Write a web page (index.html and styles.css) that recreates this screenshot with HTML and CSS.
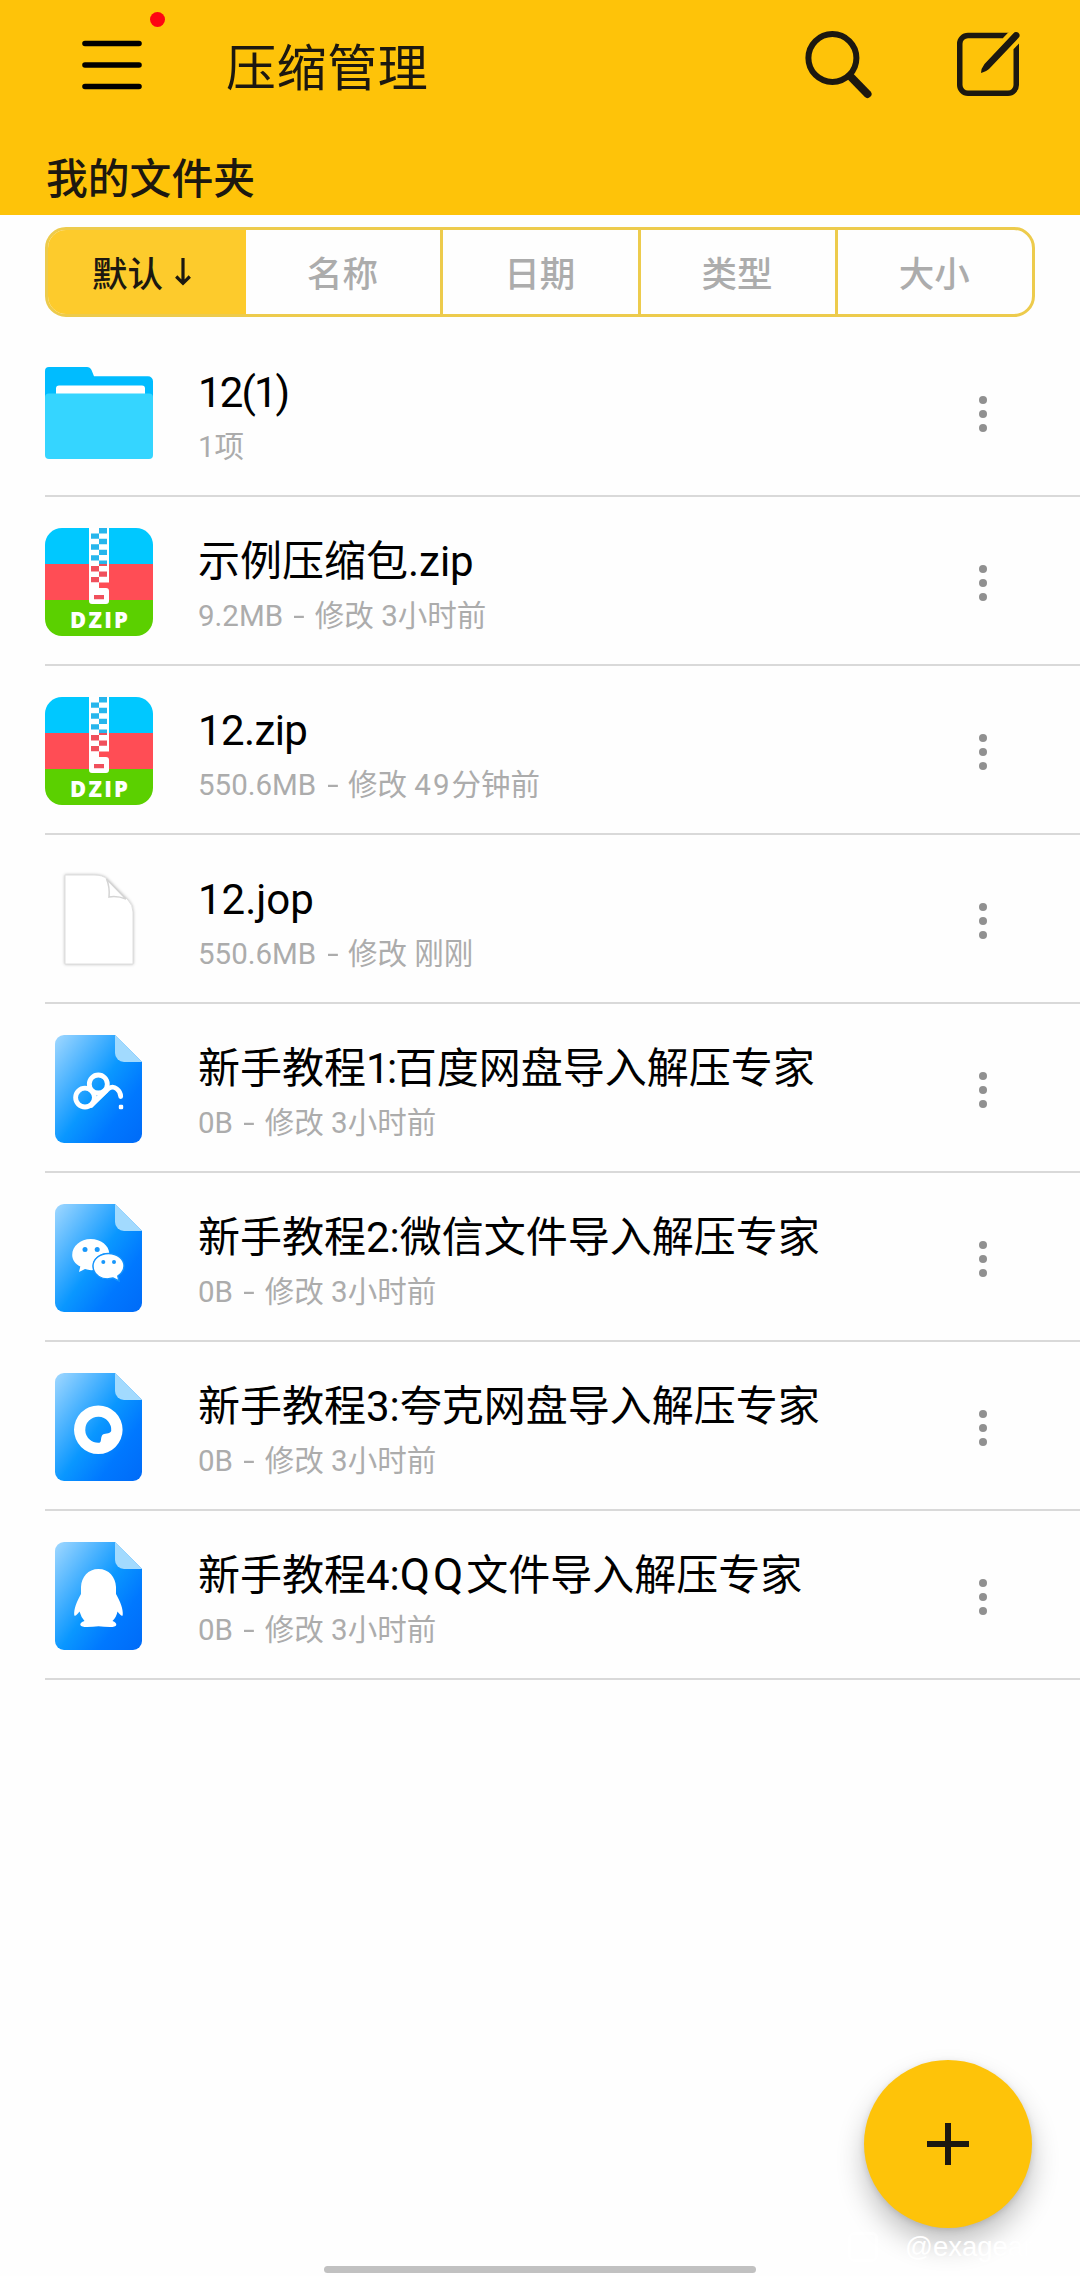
FILE: index.html
```html
<!DOCTYPE html>
<html lang="zh-CN">
<head>
<meta charset="utf-8">
<title>压缩管理</title>
<link rel="stylesheet" href="styles.css">
</head>
<body>
<svg class="defs" width="0" height="0" aria-hidden="true">
  <defs>
    <linearGradient id="docFill" x1="0" y1="0.05" x2="1" y2="0.95">
      <stop offset="0" stop-color="#9ad5ff"/>
      <stop offset="0.5" stop-color="#0a97ff"/>
      <stop offset="0.75" stop-color="#0078ff"/>
      <stop offset="1" stop-color="#006cf8"/>
    </linearGradient>
    <symbol id="doc" viewBox="0 0 87 108">
      <path d="M9 0H60L87 27V99a9 9 0 0 1-9 9H9a9 9 0 0 1-9-9V9a9 9 0 0 1 9-9z" fill="url(#docFill)"/>
      <path d="M60 0L87 27H69a9 9 0 0 1-9-9z" fill="#a2dafe"/>
    </symbol>
    <symbol id="zip" viewBox="0 0 108 108">
      <path d="M0 36V17A17 17 0 0 1 17 0H91A17 17 0 0 1 108 17V36z" fill="#00c8ff"/>
      <path d="M0 36H108V72H0z" fill="#ff4d55"/>
      <path d="M0 72H108V91A17 17 0 0 1 91 108H17A17 17 0 0 1 0 91z" fill="#5bd000"/>
      <path d="M44 0H64V54.4H54V60H61a3 3 0 0 1 3 3V73a3 3 0 0 1-3 3H47a3 3 0 0 1-3-3z" fill="#fff"/>
      <path d="M54 0h8v5.4h-8zM46 5.4h8v5.4h-8zM54 10.8h8v5.4h-8zM46 16.3h8v5.4h-8zM54 21.7h8v5.4h-8zM46 27.2h8v5.4h-8zM54 32.6h8v3.4h-8z" fill="#27b6ec"/>
      <path d="M54 36h8v2h-8zM46 38h8v5.4h-8zM54 43.4h8v5.4h-8zM46 48.9h8v5.4h-8zM49 67h10v4.300h-10z" fill="#f0505c"/>
      <text x="25" y="100" textLength="58" lengthAdjust="spacing" class="zip-label">DZIP</text>
    </symbol>
  </defs>
</svg>

<header class="header">
  <div class="bar">
    <button class="icon-btn menu" aria-label="菜单">
      <svg width="60" height="50" viewBox="0 0 60 50"><path d="M3 3.500H57M3 25H57M3 46.500H57" stroke="#000" stroke-width="5.600" stroke-linecap="round"/></svg>
      <span class="badge"></span>
    </button>
    <h1 class="title">压缩管理</h1>
    <button class="icon-btn" aria-label="搜索">
      <svg width="68" height="70" viewBox="0 0 68 70" fill="none" stroke="#1c1810"><circle cx="28.400" cy="28" r="24" stroke-width="6"/><path d="M46 46L63.500 64" stroke-width="8" stroke-linecap="round"/></svg>
    </button>
    <button class="icon-btn edit" aria-label="编辑">
      <svg width="66" height="66" viewBox="0 0 66 66" fill="none" stroke="#1c1810"><path d="M52.500 0.300L46.800 6.200H12a5.500 5.500 0 0 0-5.500 5.500V53a5.500 5.500 0 0 0 5.500 5.500H52a5.500 5.500 0 0 0 5.500-5.500V17.300L63 11.500V53A11 11 0 0 1 52 64H12A11 11 0 0 1 1 53V11.700A11 11 0 0 1 12 0.700H52.500z" fill="#1c1810" stroke="none"/><path d="M60.200 0a3.400 3.400 0 0 1 2.400 5.800L33.500 36.500Q31 39 25 41Q25 36.500 28.500 32L57.500 1.200A3.400 3.400 0 0 1 60.200 0z" fill="#1c1810" stroke="none"/></svg>
    </button>
  </div>
  <h2 class="path">我的文件夹</h2>
</header>

<nav class="tabs">
  <button class="tab active">默认<svg width="16" height="28" viewBox="0 0 16 28" fill="none" stroke="#1c1810" stroke-width="3.200"><path d="M8 0V25M1.200 18.500L8 25.300L14.800 18.500"/></svg></button>
  <button class="tab">名称</button>
  <button class="tab">日期</button>
  <button class="tab">类型</button>
  <button class="tab">大小</button>
</nav>

<main class="list">
  <article class="row">
    <div class="thumb"><svg width="108" height="92" viewBox="0 0 108 92"><path d="M4 0H42q3 0 4.500 3L49 9.300H103a5 5 0 0 1 5 5V40H0V4a4 4 0 0 1 4-4z" fill="#00bcff"/><path d="M11 30V21.500a3 3 0 0 1 3-3H97a3 3 0 0 1 3 3V30z" fill="#fff"/><rect y="26.500" width="108" height="65.500" rx="4" fill="#35d5ff"/></svg></div>
    <div class="info"><div class="name tight">12(1)</div><div class="meta">1项</div></div>
    <button class="more" aria-label="更多"><i></i><i></i><i></i></button>
  </article>
  <article class="row">
    <div class="thumb"><svg width="108" height="108"><use href="#zip"/></svg></div>
    <div class="info"><div class="name">示例压缩包.zip</div><div class="meta">9.2MB <span class="dash">-</span> 修改 3小时前</div></div>
    <button class="more" aria-label="更多"><i></i><i></i><i></i></button>
  </article>
  <article class="row">
    <div class="thumb"><svg width="108" height="108"><use href="#zip"/></svg></div>
    <div class="info"><div class="name latin">12.zip</div><div class="meta">550.6MB <span class="dash">-</span> 修改 <span class="digits">49</span>分钟前</div></div>
    <button class="more" aria-label="更多"><i></i><i></i><i></i></button>
  </article>
  <article class="row">
    <div class="thumb"><svg class="blank" width="70" height="91" viewBox="0 0 70 91"><path d="M1 1H30Q39 1 43 5L64 26Q69 31 69 38V90H1z" fill="#fff" stroke="#dedede"/><path d="M42.500 5Q46 13 45 23Q53 21.500 62 25z" fill="#fff" stroke="#d4d4d4" stroke-width="1.500"/></svg></div>
    <div class="info"><div class="name">12.jop</div><div class="meta">550.6MB <span class="dash">-</span> 修改 刚刚</div></div>
    <button class="more" aria-label="更多"><i></i><i></i><i></i></button>
  </article>
  <article class="row">
    <div class="thumb"><svg class="doc" width="87" height="108" viewBox="0 0 87 108"><use href="#doc"/><g fill="none" stroke="#fff" stroke-width="4.800"><circle cx="43.300" cy="49" r="9"/><circle cx="30" cy="62.600" r="9.400"/><path d="M36 70L53.500 53.500Q58 50.500 62 54Q65.700 57 65.700 61.500" stroke-linecap="round"/></g><path d="M33 71L37 73L53 57L49 54L36 67z" fill="#fff"/><rect x="63.800" y="69.800" width="4.400" height="4.400" rx="1.200" fill="#fff"/></svg></div>
    <div class="info"><div class="name">新手教程<span class="one">1:</span>百度网盘导入解压专家</div><div class="meta">0B <span class="dash">-</span> 修改 3小时前</div></div>
    <button class="more" aria-label="更多"><i></i><i></i><i></i></button>
  </article>
  <article class="row">
    <div class="thumb"><svg class="doc" width="87" height="108" viewBox="0 0 87 108"><use href="#doc"/><path d="M35.700 35C46 35 54 41.500 54.300 49.500C44 48 35 57 38.500 66Q34 66.500 30 65L24 68L25.300 62.500C20 60 17.200 55.500 17.200 51C17.200 42 25.500 35 35.700 35z" fill="#fff"/><path d="M53.500 49.500C62.500 49.500 69 55.500 69 62C69 66.500 66.500 69.500 62.800 72L64 77L58 74C47 77 38 71 38 62C38 55.500 44.500 49.500 53.500 49.500z" fill="#fff" stroke="#1493fd" stroke-width="1.400"/><g fill="#1897fb"><circle cx="30" cy="45.500" r="2.500"/><circle cx="42.200" cy="45.500" r="2.500"/><circle cx="48.300" cy="58" r="2"/><circle cx="59" cy="58" r="2"/></g></svg></div>
    <div class="info"><div class="name">新手教程2:微信文件导入解压专家</div><div class="meta">0B <span class="dash">-</span> 修改 3小时前</div></div>
    <button class="more" aria-label="更多"><i></i><i></i><i></i></button>
  </article>
  <article class="row">
    <div class="thumb"><svg class="doc" width="87" height="108" viewBox="0 0 87 108"><use href="#doc"/><path fill-rule="evenodd" d="M43.300 32.500a24.300 24.300 0 1 1 0 48.600a24.300 24.300 0 1 1 0-48.600zM56.200 58A13 13 0 1 0 44.500 69.700C46.500 69 45.500 65.500 47 62.500C49 59.500 55 61.500 56.200 58z" fill="#fff"/></svg></div>
    <div class="info"><div class="name">新手教程3:夸克网盘导入解压专家</div><div class="meta">0B <span class="dash">-</span> 修改 3小时前</div></div>
    <button class="more" aria-label="更多"><i></i><i></i><i></i></button>
  </article>
  <article class="row">
    <div class="thumb"><svg class="doc" width="87" height="108" viewBox="0 0 87 108"><use href="#doc"/><path d="M43.500 27C54 27 60.500 35 61 45V52C65 59 68.500 67 67.700 73.500Q66 74.500 62.500 69.500Q61.500 75 57.500 79Q61.500 80.500 61.300 83Q60.500 85 55 85Q49 85 43.500 84.300Q38 85 32 85Q26.500 85 25.300 83Q25 80.500 29.500 79Q26 75 24.500 69.500Q21 74.500 19.300 73.500C18.500 67 22 59 26 52V45C26.500 35 33 27 43.500 27z" fill="#fff"/></svg></div>
    <div class="info"><div class="name">新手教程4:<span class="qq">QQ</span>文件导入解压专家</div><div class="meta">0B <span class="dash">-</span> 修改 3小时前</div></div>
    <button class="more" aria-label="更多"><i></i><i></i><i></i></button>
  </article>
</main>

<button class="fab" aria-label="添加"><svg width="42" height="42" viewBox="0 0 42 42"><path d="M0 21H42M21 0V42" stroke="#1c1810" stroke-width="6"/></svg></button>
<div class="watermark"><span class="mark"></span>@exagear</div>
<div class="home-bar"></div>
</body>
</html>
```
FILE: styles.css
```css
* { box-sizing: border-box; }
body {
  margin: 0;
  position: relative;
  height: 2276px;
  overflow: hidden;
  background: #fefefe;
  color: #000;
  font-family: Roboto, "Noto Sans CJK SC", sans-serif;
}
.defs { position: absolute; }
svg { display: block; flex: none; }
button { margin: 0; padding: 0; border: 0; background: none; font: inherit; color: inherit; }
h1, h2 { margin: 0; }

.header { height: 215px; background: #fec309; color: #1c1810; }
.bar { display: flex; align-items: center; height: 129px; padding: 0 58px 0 82px; }
.icon-btn { position: relative; }
.menu { margin-right: 84px; }
.badge {
  position: absolute;
  top: -28px;
  right: -23px;
  width: 15px;
  height: 15px;
  border-radius: 50%;
  background: #fe0412;
}
.title { flex: 1; font: 400 50px/60px "Noto Sans CJK SC", sans-serif; letter-spacing: 0.600px; padding-bottom: 2px; }
.edit { margin-left: 84px; }
.path { padding-left: 46px; font: 500 41.800px/60px "Noto Sans CJK SC", sans-serif; padding-top: 17px; }

.tabs {
  display: flex;
  height: 90px;
  margin: 12px 45px 0;
  border: 3px solid #edcb4c;
  border-radius: 21px;
  overflow: hidden;
}
.tab {
  flex: 1 1 0;
  display: flex;
  align-items: center;
  justify-content: center;
  gap: 12px;
  color: #acacac;
  font: 500 35.500px/50px "Noto Sans CJK SC", sans-serif;
}
.tab + .tab { border-left: 3px solid #edcb4c; padding-right: 1px; }
.tab.active { flex: 0 0 195px; padding-right: 8px; background: #fdcb2c; color: #1c1810; }
.tab.active + .tab { border-left-color: #fdcb2c; }

.list { margin: 11px 0 0 45px; }
.row { display: flex; height: 169px; border-bottom: 2px solid #d9d9d9; }
.thumb { display: flex; width: 108px; padding-top: 2px; align-items: center; justify-content: center; }
.doc { margin-right: 1px; }
.blank { filter: drop-shadow(0 0 1.500px rgba(0, 0, 0, 0.250)); }
.info { flex: 1; padding: 38px 0 0 45px; }
.name { font-size: 42px; line-height: 54px; white-space: nowrap; }
.name.tight { letter-spacing: -1.900px; }
.name.latin { letter-spacing: -0.600px; }
.one { letter-spacing: -2.500px; }
.qq { font-size: 44px; line-height: 1; letter-spacing: 3px; }
.meta { font-size: 29.500px; line-height: 54px; color: #acacac; white-space: nowrap; }
.dash { display: inline-block; margin: 0 4px 0 5px; transform: scaleX(1.400); }
.digits { letter-spacing: 2px; }
.more {
  display: flex;
  flex-direction: column;
  align-items: center;
  justify-content: center;
  gap: 6px;
  width: 40px;
  margin-right: 77px;
  padding-top: 5px;
}
.more i { width: 8px; height: 8px; border-radius: 50%; background: #909090; }
.zip-label { font: 800 22px "Open Sans", sans-serif; fill: #fff; }

.fab {
  position: absolute;
  left: 864px;
  top: 2060px;
  width: 168px;
  height: 168px;
  display: flex;
  align-items: center;
  justify-content: center;
  border-radius: 50%;
  background: #fec309;
  box-shadow: 0 16px 28px rgba(0, 0, 0, 0.240), 0 2px 6px rgba(0, 0, 0, 0.120);
}
.watermark {
  position: absolute;
  left: 848px;
  top: 2230px;
  display: flex;
  align-items: center;
  gap: 27px;
  font: 27.500px/34px "Liberation Sans", sans-serif;
  color: #fff;
}
.mark { width: 30px; height: 30px; border: 3px solid rgba(255, 255, 255, 0.600); border-radius: 6px; }
.home-bar {
  position: absolute;
  left: 324px;
  top: 2266px;
  width: 432px;
  height: 7px;
  border-radius: 4px;
  background: #c1c1c1;
}
```
